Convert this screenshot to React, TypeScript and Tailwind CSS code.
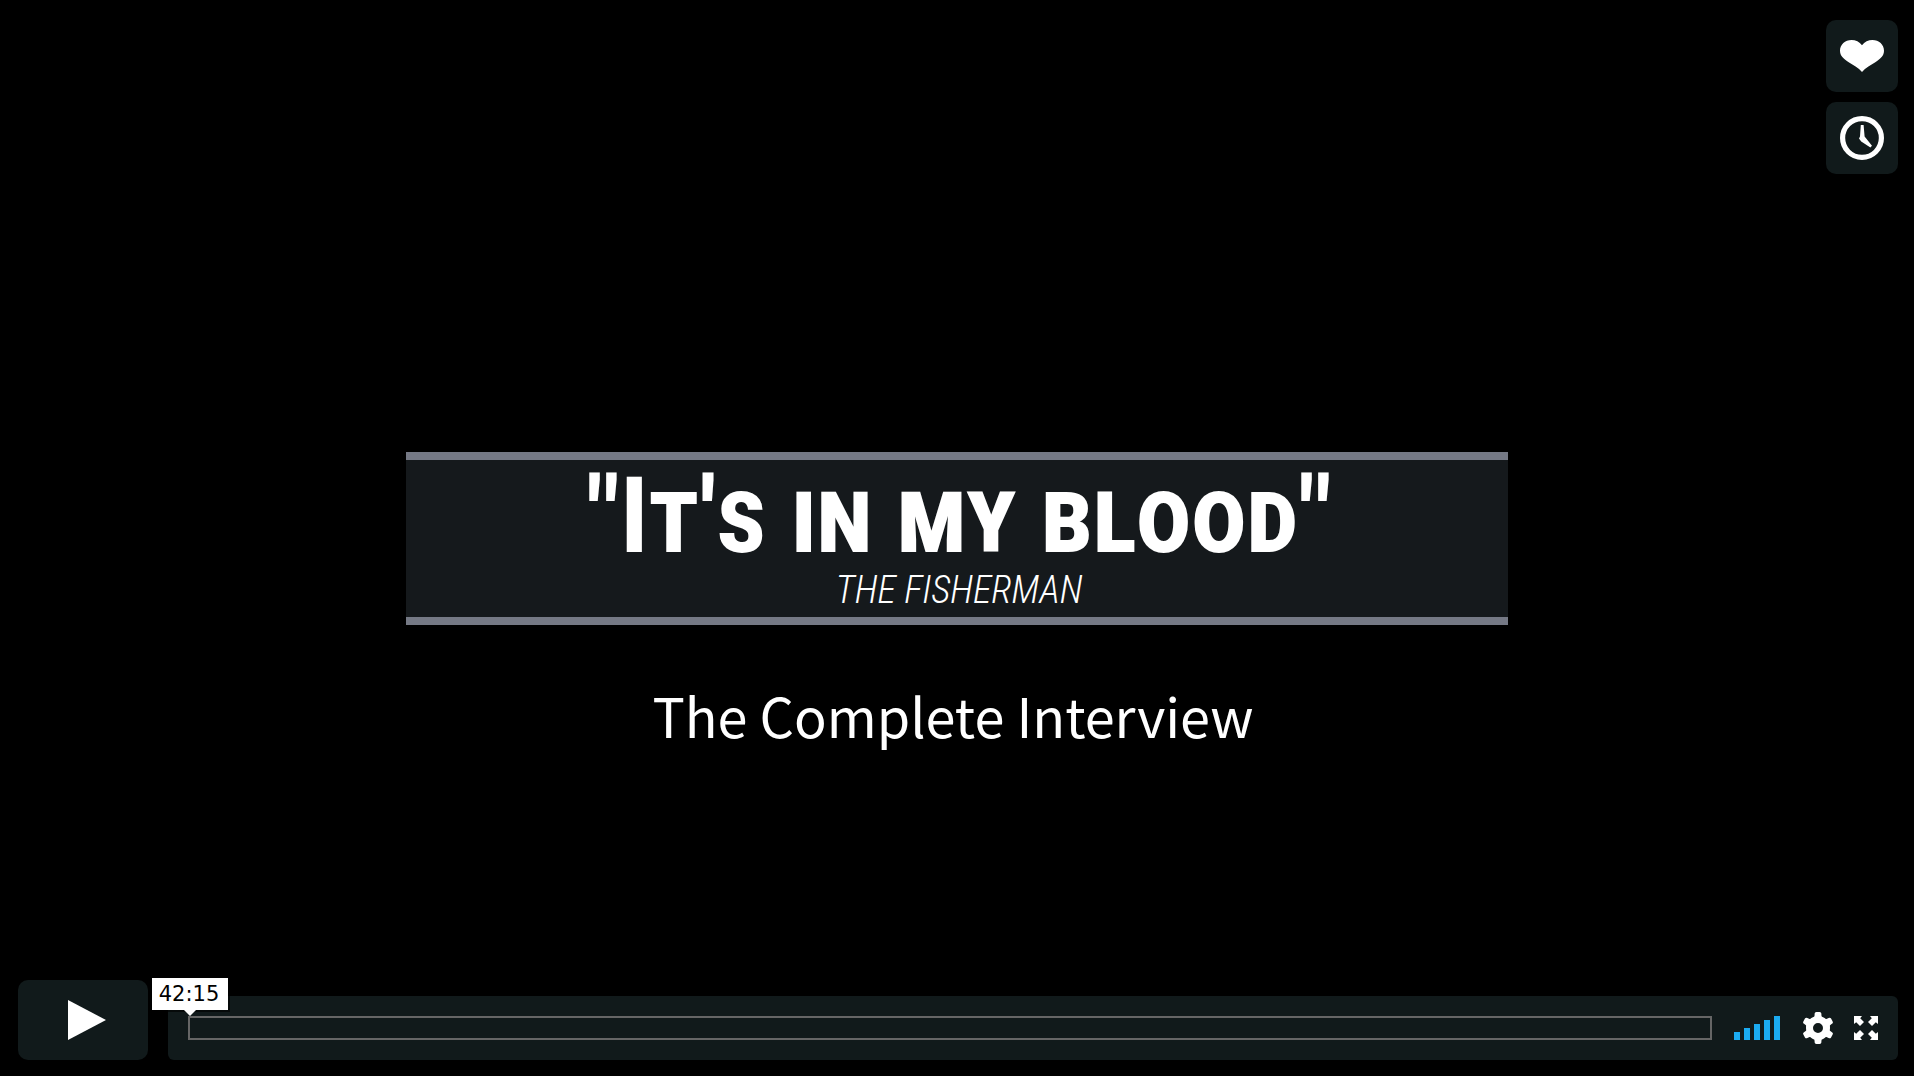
import { useState } from "react";

const DURATION = 42 * 60 + 15;

function formatTime(seconds: number) {
  const m = Math.floor(seconds / 60);
  const s = seconds % 60;
  return `${m}:${String(s).padStart(2, "0")}`;
}

function HeartIcon() {
  return (
    <svg viewBox="0 0 44 32" className="h-8 w-11 fill-white" aria-hidden="true">
      <path d="M22 5.2C19.5 1.8 15.6 0 11.6 0C5 0 0 4.6 0 10.8C0 16 3.5 18.8 8.3 22C13 25.2 18.5 27.8 22 32C25.5 27.8 31 25.2 35.7 22C40.5 18.8 44 16 44 10.8C44 4.6 39 0 32.4 0C28.4 0 24.5 1.8 22 5.2Z" />
    </svg>
  );
}

function ClockIcon() {
  return (
    <svg viewBox="0 0 44 44" className="size-11" aria-hidden="true">
      <circle cx="22" cy="22" r="19.4" fill="none" stroke="#fff" strokeWidth="5.2" />
      <path d="M20.8 9H23.6L24.6 20.6L32 29.8L30.4 31.6L21.2 25.6L19 22.6L20 20.6Z" fill="#fff" />
    </svg>
  );
}

function GearIcon() {
  return (
    <svg viewBox="0 0 32 32" className="size-8" aria-hidden="true">
      <circle cx="16" cy="16" r="8.5" fill="none" stroke="#fff" strokeWidth="7" />
      {[0, 60, 120, 180, 240, 300].map((angle) => (
        <path
          key={angle}
          d="M11 6.5Q12.6 5.4 12.6 3V1.8Q12.6 0 14.4 0H17.6Q19.4 0 19.4 1.8V3Q19.4 5.4 21 6.5L18 9H14Z"
          fill="#fff"
          transform={`rotate(${angle} 16 16)`}
        />
      ))}
    </svg>
  );
}

function ExpandIcon() {
  return (
    <svg viewBox="0 0 24 24" className="size-6" aria-hidden="true">
      {[0, 90, 180, 270].map((angle) => (
        <path
          key={angle}
          d="M0 0H8L6.2 2.2L10 6L6 10L2.2 6.2L0 8Z"
          fill="#fff"
          transform={`rotate(${angle} 12 12)`}
        />
      ))}
    </svg>
  );
}

function SideButton({ label, children }: { label: string; children: React.ReactNode }) {
  return (
    <button
      type="button"
      aria-label={label}
      className="flex size-[72px] items-center justify-center rounded-[10px] bg-[#111a1b]"
    >
      {children}
    </button>
  );
}

function VolumeBars() {
  return (
    <button type="button" aria-label="Volume" className="flex h-6 items-end gap-1">
      <span className="h-2 w-1.5 bg-[#1babf1]" />
      <span className="h-3 w-1.5 bg-[#1babf1]" />
      <span className="h-4 w-1.5 bg-[#1babf1]" />
      <span className="h-5 w-1.5 bg-[#1babf1]" />
      <span className="h-6 w-1.5 bg-[#1babf1]" />
    </button>
  );
}

export default function App() {
  const [position, setPosition] = useState(0);

  return (
    <div className="relative flex min-h-screen flex-col overflow-hidden bg-black text-white">
      <main className="flex flex-1 flex-col items-center pt-[452px]">
        <div className="flex w-[57.6%] flex-col items-center border-y-8 border-[#757985] bg-[#15191c] pt-1 pb-[5px] pl-1 text-center font-['Roboto_Condensed',Roboto,sans-serif]">
          <h1 className="text-[106px] leading-[104px] font-bold whitespace-nowrap [font-variant-caps:small-caps]">
            "It's in my blood"
          </h1>
          <p className="text-[38px] leading-[44px] font-light whitespace-nowrap italic">THE FISHERMAN</p>
        </div>
        <p className="mt-12 pr-2 text-[54px] leading-[84px] whitespace-nowrap font-['Noto_Sans_CJK_SC','Open_Sans',sans-serif]">
          The Complete Interview
        </p>
      </main>

      <div className="absolute top-5 right-4 flex flex-col gap-2.5">
        <SideButton label="Like">
          <HeartIcon />
        </SideButton>
        <SideButton label="Watch later">
          <ClockIcon />
        </SideButton>
      </div>

      <footer className="flex items-end gap-5 pr-4 pb-4 pl-[18px]">
        <button
          type="button"
          aria-label="Play"
          className="flex h-20 w-[130px] items-center justify-center rounded-[10px] bg-[#111a1b] pl-2"
        >
          <svg viewBox="0 0 38 40" className="h-10 w-[38px] fill-white" aria-hidden="true">
            <path d="M0 0L38 20L0 40Z" />
          </svg>
        </button>

        <div className="flex h-16 flex-1 items-center rounded-md bg-[#111a1b] px-5">
          <div className="relative flex h-6 flex-1">
            <input
              type="range"
              aria-label="Seek"
              min={0}
              max={DURATION}
              value={position}
              onChange={(e) => setPosition(Number(e.target.value))}
              className="h-6 w-full appearance-none border-2 border-[#666] bg-transparent [&::-webkit-slider-thumb]:opacity-0"
            />
            <output className="absolute bottom-[30px] -left-9 flex h-8 w-[76px] items-center justify-center bg-white pt-0.5 pr-0.5 font-['DejaVu_Sans',sans-serif] text-[21px] text-black shadow-[2px_2px_0_rgba(0,0,0,0.6)]">
              {formatTime(DURATION - position)}
              <svg viewBox="0 0 12 6" className="absolute top-full left-8 h-1.5 w-3 fill-white" aria-hidden="true">
                <path d="M0 0H12L6 6Z" />
              </svg>
            </output>
          </div>
          <div className="ml-[22px] flex items-center">
            <VolumeBars />
            <button type="button" aria-label="Settings" className="ml-[22px]">
              <GearIcon />
            </button>
            <button type="button" aria-label="Enter full screen" className="ml-5">
              <ExpandIcon />
            </button>
          </div>
        </div>
      </footer>
    </div>
  );
}
